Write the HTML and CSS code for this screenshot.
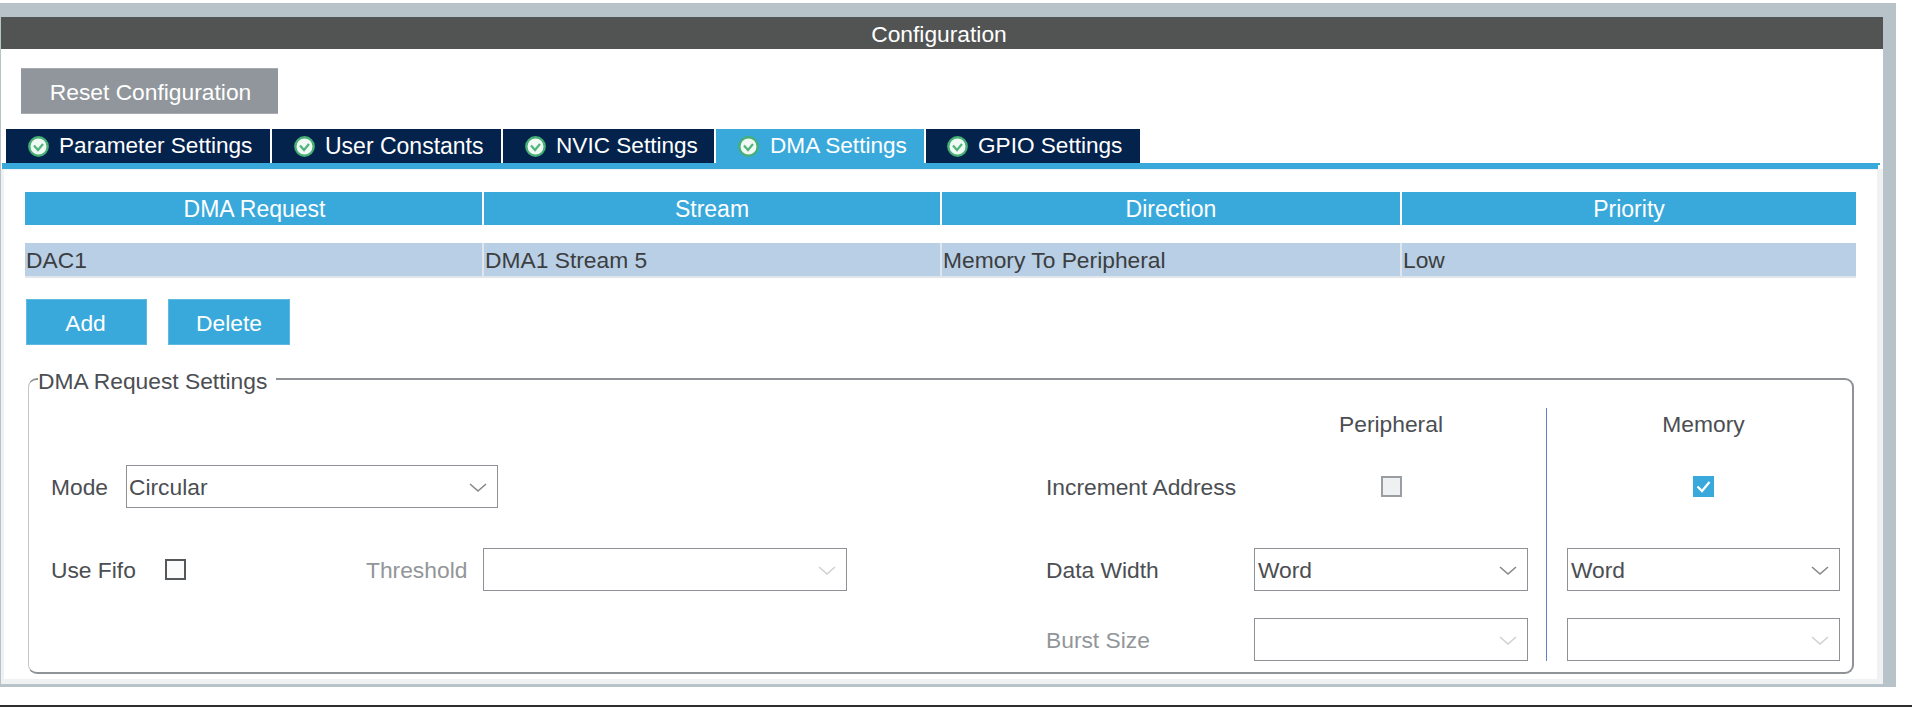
FILE: index.html
```html
<!DOCTYPE html>
<html>
<head lang="en">
    <meta charset="UTF-8">
    <title>Configuration</title>
    <link rel="stylesheet" href="styles.css">
</head>
<body>
<svg class="defs" width="0" height="0">
    <symbol id="ok" viewBox="0 0 21 21">
        <circle cx="10.5" cy="10.5" r="9.2" fill="#f1f9f4" stroke="#46b074" stroke-width="2.4"/>
        <path d="M6 9.5l4 4.5 5-6" fill="none" stroke="#4fb57a" stroke-width="2.2"/>
    </symbol>
    <symbol id="down" viewBox="0 0 18 10">
        <path d="M1 1l8 7 8-7" fill="none" stroke="currentColor" stroke-width="1.6"/>
    </symbol>
</svg>
<div class="window">
    <div class="title">Configuration</div>
    <div class="top">
        <button class="btn-reset">Reset Configuration</button>
    </div>
    <ul class="tabs">
        <li class="tab tab-1"><svg class="ok"><use href="#ok"/></svg>Parameter Settings</li>
        <li class="tab tab-2"><svg class="ok"><use href="#ok"/></svg>User Constants</li>
        <li class="tab tab-3"><svg class="ok"><use href="#ok"/></svg>NVIC Settings</li>
        <li class="tab tab-4 selected"><svg class="ok"><use href="#ok"/></svg>DMA Settings</li>
        <li class="tab tab-5"><svg class="ok"><use href="#ok"/></svg>GPIO Settings</li>
    </ul>
    <div class="tab-line"></div>
    <div class="panel">
        <div class="content">
            <div class="grid-row head">
                <div>DMA Request</div>
                <div>Stream</div>
                <div>Direction</div>
                <div>Priority</div>
            </div>
            <div class="grid-row data">
                <div>DAC1</div>
                <div>DMA1 Stream 5</div>
                <div>Memory To Peripheral</div>
                <div>Low</div>
            </div>
            <div class="actions">
                <button class="btn btn-add">Add</button>
                <button class="btn btn-delete">Delete</button>
            </div>
            <fieldset class="group">
                <legend>DMA Request Settings</legend>
                <div class="left">
                    <div class="line">
                        <label class="lbl-mode">Mode</label>
                        <div class="select sel-mode">Circular<svg class="down"><use href="#down"/></svg></div>
                    </div>
                    <div class="line line-fifo">
                        <label class="lbl-fifo">Use Fifo</label>
                        <span class="check"></span>
                        <label class="lbl-threshold off">Threshold</label>
                        <div class="select sel-threshold empty"><svg class="down"><use href="#down"/></svg></div>
                    </div>
                </div>
                <div class="right">
                    <div class="divider"></div>
                    <div></div>
                    <div class="col-title">Peripheral</div>
                    <div class="col-title col-memory">Memory</div>
                    <label>Increment Address</label>
                    <span class="check check-off"></span>
                    <span class="check check-on">
                        <svg viewBox="0 0 21 21"><path d="M4.5 10.5l4.5 4.5 7.5-9" fill="none" stroke="#fff" stroke-width="2.2"/></svg>
                    </span>
                    <label>Data Width</label>
                    <div class="select">Word<svg class="down"><use href="#down"/></svg></div>
                    <div class="select col-memory">Word<svg class="down"><use href="#down"/></svg></div>
                    <label class="off">Burst Size</label>
                    <div class="select empty"><svg class="down"><use href="#down"/></svg></div>
                    <div class="select empty col-memory"><svg class="down"><use href="#down"/></svg></div>
                </div>
            </fieldset>
        </div>
    </div>
</div>
<div class="footer"></div>
</body>
</html>
```

FILE: styles.css
```css
*{
    padding: 0;
    margin: 0;
    box-sizing: border-box;
}
ul{
    list-style: none;
}
html,body{
    height: 707px;
    overflow: hidden;
    background-color: #ffffff;
}
body{
    font-family: "Liberation Sans", Arial, sans-serif;
    font-size: 22.8px;
    color: #4b4e52;
}
button{
    font: inherit;
    border: none;
    color: #ffffff;
}
.defs{
    position: absolute;
}
.window{
    width: 1896px;
    height: 684px;
    margin-top: 3px;
    border-top: 14px solid #b7c2c9;
    border-left: 1px solid #b7c2c9;
    border-right: 13px solid #b7c2c9;
    border-bottom: 3px solid #b7c2c9;
}
.title{
    height: 32px;
    line-height: 34px;
    padding-right: 6px;
    text-align: center;
    color: #ffffff;
    background-color: #525453;
}
.top{
    padding: 19px 0 15px 20px;
}
.btn-reset{
    display: block;
    width: 257px;
    height: 46px;
    padding: 3px 0 0 2px;
    background-color: #90969b;
    border-top: 1px solid #a6abaf;
    border-bottom: 1px solid #a6abaf;
}
.tabs{
    display: flex;
    gap: 2px;
    height: 34px;
    padding-left: 5px;
}
.tab{
    display: flex;
    align-items: center;
    padding-left: 22px;
    line-height: 36px;
    font-size: 22.6px;
    color: #ffffff;
    background-color: #03224c;
}
.tab-1{ width: 264px; }
.tab-2{ width: 229px; font-size: 23px; }
.tab-3{ width: 211px; }
.tab-4{ width: 208px; }
.tab-5{ width: 214px; padding-left: 21px; }
.tab.selected{
    background-color: #39a9dc;
}
.ok{
    width: 21px;
    height: 21px;
    margin-right: 10px;
    flex: none;
}
.tab-4 .ok{
    margin-right: 11px;
}
.tab-line{
    position: relative;
    width: 1876px;
    height: 6px;
    margin-left: 1px;
    background-color: #39a9dc;
}
.tab-line:after{
    content: "";
    position: absolute;
    left: 100%;
    top: 0;
    width: 2px;
    height: 2px;
    background-color: #39a9dc;
}
.panel{
    height: 515px;
    padding: 1px 6px 5px 3px;
    background-color: #f0f1f2;
}
.content{
    height: 509px;
    padding: 22px 21px 0;
    background-color: #ffffff;
}
.grid-row{
    display: grid;
    grid-template-columns: 457px 456px 458px 454px;
    column-gap: 2px;
}
.head{
    grid-template-rows: 33px;
    line-height: 35px;
    font-size: 23px;
    text-align: center;
    color: #ffffff;
}
.head div{
    background-color: #39a9dc;
}
.head div:first-child{
    padding-left: 2px;
}
.data{
    grid-template-rows: 33px;
    height: 35px;
    margin-top: 18px;
    line-height: 35px;
    color: #3c3e40;
    background-color: #e0e6eb;
}
.data div{
    padding-left: 1px;
    background-color: #b8cfe5;
}
.actions{
    display: flex;
    gap: 21px;
    margin: 21px 0 20px 1px;
}
.btn{
    height: 46px;
    padding-top: 2px;
    background-color: #39a9dc;
    border: 1px solid #5fb9e2;
}
.btn-add{ width: 121px; padding-right: 2px; }
.btn-delete{ width: 122px; }
.group{
    display: flex;
    justify-content: space-between;
    width: 1826px;
    height: 309px;
    margin-left: 3px;
    padding: 15px 12px 0 22px;
    border: 2px solid #8f9397;
    border-left: 1px solid #c4c7ca;
    border-radius: 9px;
}
.group legend{
    margin-left: -13px;
    padding: 4px 9px 0 0;
    line-height: 24px;
}
.left{
    width: 796px;
    padding-top: 57px;
}
.line{
    display: flex;
    align-items: center;
    height: 43px;
}
.line-fifo{
    margin-top: 40px;
}
.line label{
    padding-top: 1px;
}
.lbl-mode{
    width: 75px;
}
.lbl-fifo{
    width: 114px;
}
.lbl-threshold{
    margin-left: auto;
    width: 117px;
}
.off{
    color: #929699;
}
.select{
    position: relative;
    height: 43px;
    line-height: 42px;
    padding-left: 3px;
    border: 1px solid #8e9296;
    color: #4b4e52;
}
.sel-mode{
    width: 372px;
    padding-left: 2px;
}
.sel-threshold{
    width: 364px;
}
.down{
    position: absolute;
    right: 10px;
    top: 17px;
    width: 18px;
    height: 10px;
    color: #85888b;
}
.empty .down{
    color: #cfd1d3;
}
.check{
    width: 21px;
    height: 21px;
    border: 2px solid #55585b;
    background-color: #fbfbfb;
}
.right{
    display: grid;
    grid-template-columns: 208px 274px 39px 273px;
    grid-template-rows: 57px 43px 83px 70px;
    align-items: end;
    width: 794px;
    height: 253px;
}
.right label{
    line-height: 42px;
}
.divider{
    grid-column: 3;
    grid-row: 1 / span 4;
    width: 1px;
    height: 253px;
    margin-left: 18px;
    background-color: #5f82c6;
}
.col-memory{
    grid-column: 4;
}
.col-title{
    align-self: start;
    padding-top: 3px;
    text-align: center;
}
.check-off{
    justify-self: center;
    align-self: center;
    border-color: #9a9ea2;
    background-color: #eef0f2;
}
.check-on{
    justify-self: center;
    align-self: center;
    border: none;
    background-color: #39a9dc;
}
.check-on svg{
    display: block;
    width: 21px;
    height: 21px;
}
.footer{
    height: 2px;
    margin-top: 18px;
    background-color: #2a2c2d;
}
```
